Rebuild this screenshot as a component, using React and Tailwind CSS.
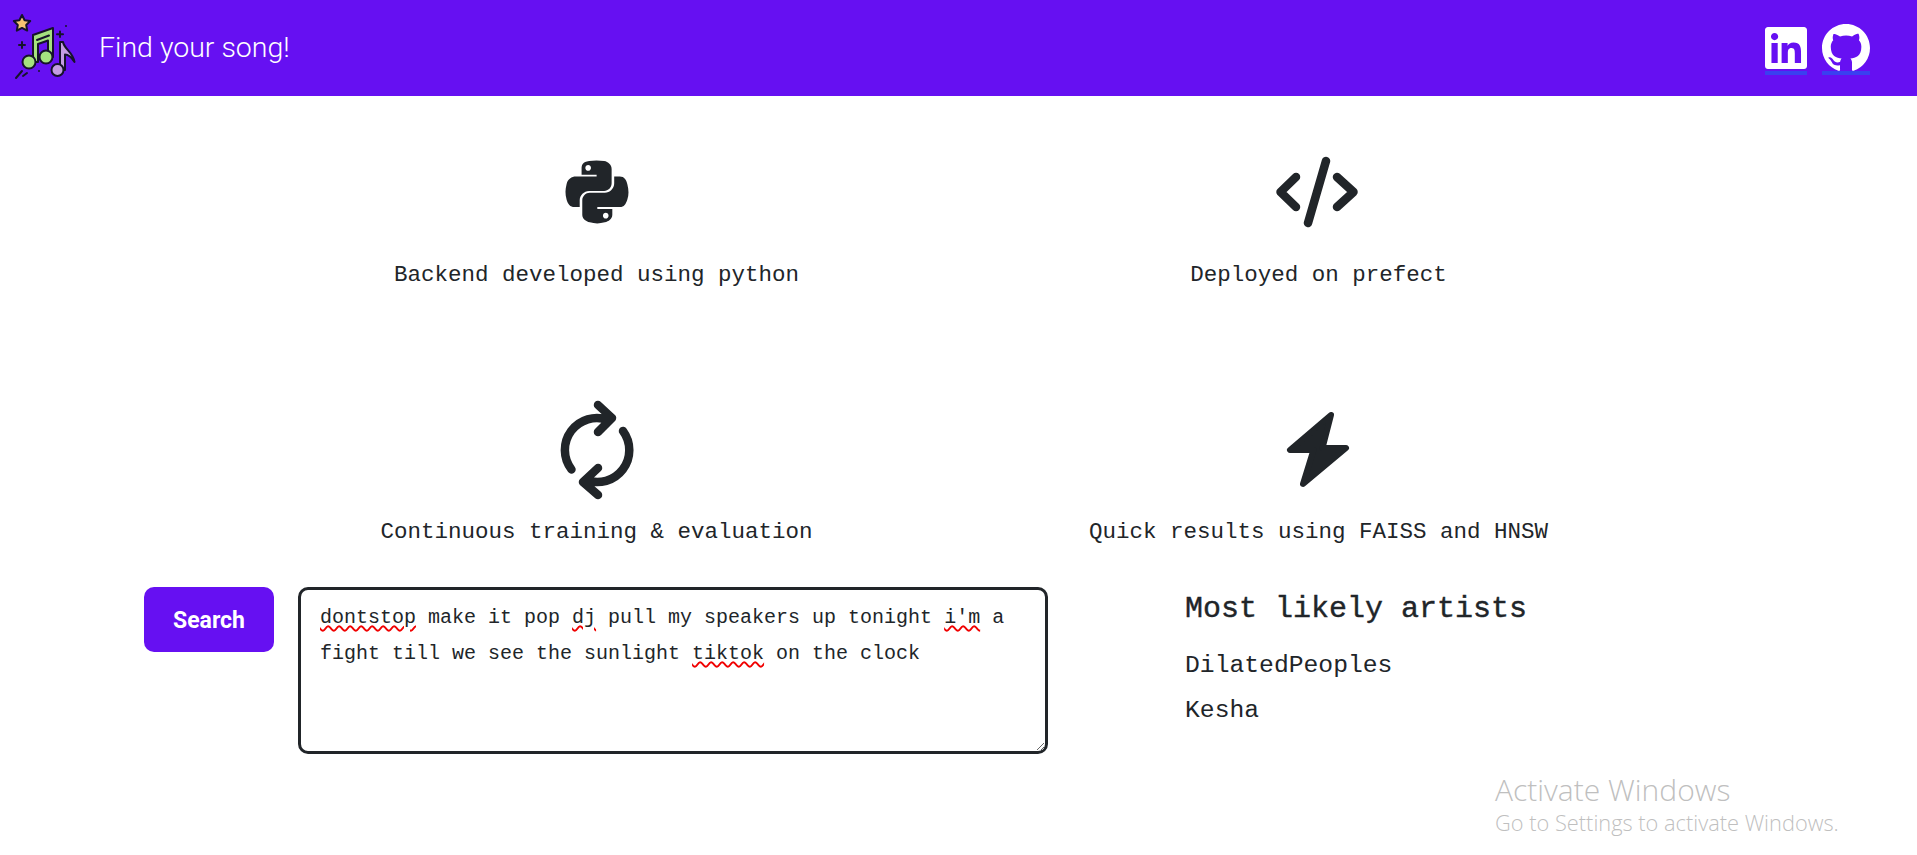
import React from "react";
import { FaPython, FaLinkedin } from "react-icons/fa";
import { BsGithub } from "react-icons/bs";

const mono = "font-['Liberation_Mono',monospace]";

function Logo() {
  return (
    <svg width="90" height="90" viewBox="0 0 90 90" className="shrink-0">
      <g stroke="#16132b" strokeWidth="2" strokeLinejoin="round" strokeLinecap="round">
        <path d="M22 13l2.6 5.2 5.6.8-4 4 1 5.6-5.2-2.7-5.2 2.7 1-5.6-4-4 5.6-.8z" fill="#f8c471" />
        <path d="M33 33L53 26V55H48V38.5L38 42V60H33z" fill="#a5e27f" />
        <path d="M37 38L49 33.5" fill="none" />
        <circle cx="29" cy="60" r="6.5" fill="#a5e27f" />
        <circle cx="46" cy="55" r="6.5" fill="#a5e27f" />
        <path d="M60 40H63C64 47 73 50 74.5 60C72 56 68 52.5 65 52.5V68H60z" fill="#c49ce3" />
        <circle cx="57.5" cy="68" r="6" fill="#c49ce3" />
        <path d="M60 29.5V35M57 32.2H63M22 40V46M19 43H25M16 76L22 69M23 74L27 71" fill="none" />
      </g>
      <circle cx="66" cy="24" r="1" fill="#16132b" />
      <circle cx="39" cy="69" r="1" fill="#16132b" />
    </svg>
  );
}

function Refresh() {
  return (
    <svg width="92" height="106" viewBox="550 396 92 106" fill="none" stroke="#212529" strokeWidth="8.5" strokeLinecap="round" strokeLinejoin="round">
      <path d="M570.5 469.5A32 32 0 0 1 607 420L611 418M597 405L611 418L597 432" />
      <path d="M622 431A32 32 0 0 1 585 480L582 482M597 468L582 482L597 495" />
    </svg>
  );
}

function Code() {
  return (
    <svg width="88" height="72" viewBox="1276 156 88 72" fill="none" stroke="#212529" strokeWidth="8.5" strokeLinecap="round" strokeLinejoin="round">
      <path d="M1297 177L1281.5 192L1297 207M1338 177L1354.5 192L1338 207M1327 161L1309 223" />
    </svg>
  );
}

function Bolt() {
  return (
    <svg width="72" height="80" viewBox="1283 410 72 80" fill="#212529" stroke="#212529" strokeWidth="6" strokeLinejoin="round">
      <path d="M1331 416L1290 451H1313.5L1303 485L1346 449H1322.5z" />
    </svg>
  );
}

function Feature({ icon, text, iconClass, gapClass }) {
  return (
    <div className="flex flex-col items-center">
      <div className={`flex items-center justify-center ${iconClass}`}>{icon}</div>
      <p className={`${mono} ${gapClass} text-[22.5px] leading-[34px] text-[#212529] whitespace-nowrap`}>{text}</p>
    </div>
  );
}

const Bad = ({ children }) => (
  <span className="underline decoration-wavy decoration-[#f00000] decoration-[1.5px] underline-offset-[2px]">{children}</span>
);

export default function App() {
  return (
    <div className="relative h-[855px] overflow-hidden bg-white">
      <header className="flex h-[96px] items-center justify-between bg-[#6610f2] pr-[47px]">
        <div className="flex items-center">
          <div className="-mt-[2px]"><Logo /></div>
          <span className="ml-[9px] font-['Roboto',sans-serif] text-[28.5px] font-light text-white">Find your song!</span>
        </div>
        <div className="mt-[3px] flex items-start gap-[15px]">
          <a className="flex h-[51px] w-[42px] justify-center overflow-hidden border-b-4 border-[#3a40f0]"><FaLinkedin size={48} color="#fff" className="shrink-0" /></a>
          <a className="block h-[51px] overflow-hidden border-b-4 border-[#3a40f0] leading-none"><BsGithub size={48} color="#fff" /></a>
        </div>
      </header>

      <section className="mx-auto grid w-[1444px] -translate-x-[1px] grid-cols-2 pt-[64px]">
        <Feature icon={<FaPython size={72} color="#212529" />} iconClass="h-[64px]" gapClass="mt-[34px]" text="Backend developed using python" />
        <Feature icon={<Code />} iconClass="h-[64px]" gapClass="mt-[34px]" text="Deployed on prefect" />
        <div className="mt-[104px]">
          <Feature icon={<Refresh />} iconClass="h-[106px]" gapClass="mt-[13px]" text="Continuous training & evaluation" />
        </div>
        <div className="mt-[104px]">
          <Feature icon={<Bolt />} iconClass="h-[106px]" gapClass="mt-[13px]" text="Quick results using FAISS and HNSW" />
        </div>
      </section>

      <section className="mt-[38px] flex items-start pl-[144px]">
        <button className="h-[65px] w-[130px] rounded-[10px] bg-[#6610f2] pt-[3px] font-['Roboto',sans-serif] text-[23px] font-bold text-white">Search</button>
        <div className={`${mono} ml-[24px] h-[167px] w-[750px] resize overflow-auto rounded-[10px] border-[3px] border-[#212529] pl-[19px] pr-[16px] pt-[10px] text-[20px] leading-[36px] text-[#212529]`}>
          <Bad>dontstop</Bad> make it pop <Bad>dj</Bad> pull my speakers up tonight <Bad>i'm</Bad> a fight till we see the sunlight <Bad>tiktok</Bad> on the clock
        </div>
        <div className={`${mono} ml-[137px] text-[#212529]`}>
          <h2 className="mt-[2px] text-[30px] leading-[40px] [-webkit-text-stroke:0.4px_#212529]">Most likely artists</h2>
          <p className="mt-[20px] text-[24.7px] leading-[32px]">DilatedPeoples</p>
          <p className="mt-[13px] text-[24.7px] leading-[32px]">Kesha</p>
        </div>
      </section>

      <div className="absolute left-[1495px] top-[772px] font-['Open_Sans',sans-serif] font-light text-[#bfbfbf]">
        <div className="text-[30px] leading-[36px]">Activate Windows</div>
        <div className="mt-[1px] text-[21.8px] leading-[28px]">Go to Settings to activate Windows.</div>
      </div>
    </div>
  );
}
